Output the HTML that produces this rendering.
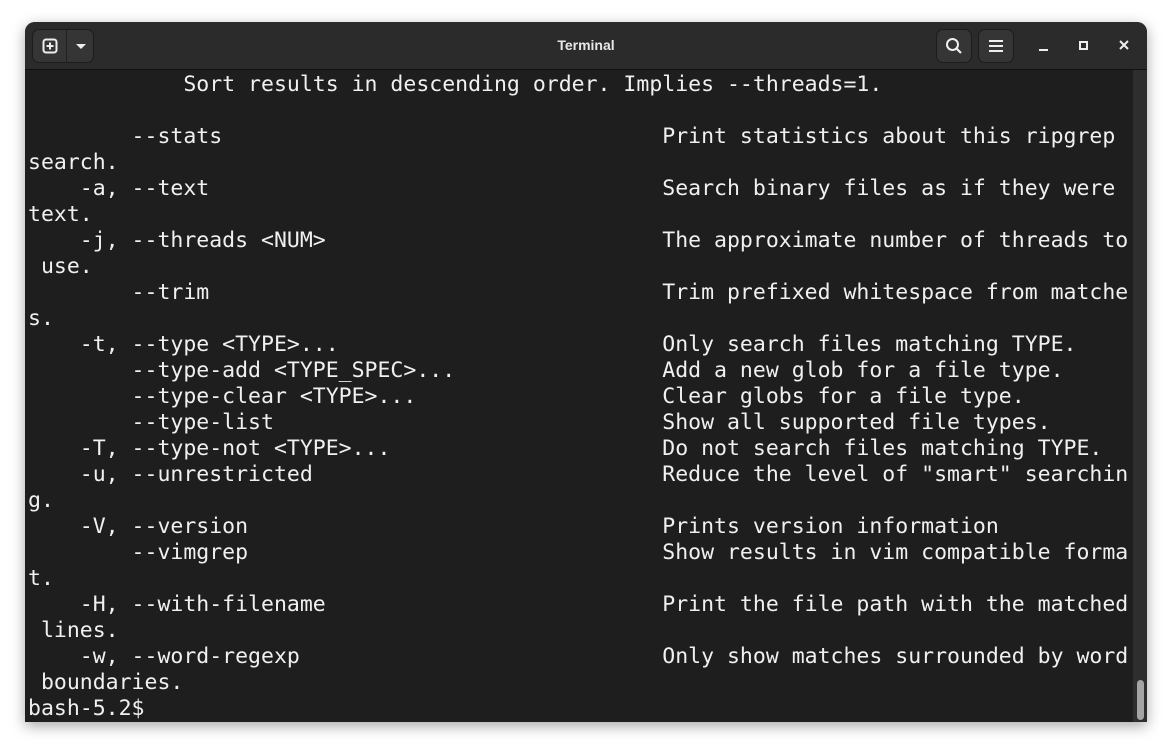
<!DOCTYPE html>
<html><head><style>
body{margin:0;width:1173px;height:751px;background:#fff;position:relative;overflow:hidden}
.win{position:absolute;left:25px;top:22px;width:1122px;height:700px;background:#1e1e1e;border-radius:10px 10px 0 0;box-shadow:0 4px 14px rgba(0,0,0,.35);overflow:hidden}
.hdr{position:absolute;left:0;top:0;right:0;height:47px;background:#2b2b2b;border-bottom:1px solid #111}
.title{position:absolute;left:0;right:0;top:15px;text-align:center;color:#e8e8e8;font:bold 14px "Liberation Sans",sans-serif}
.btn{position:absolute;top:8px;height:32px;background:#353535;border-radius:6px;box-shadow:0 0 0 1px #1c1c1c}
pre{position:absolute;left:3px;top:50px;margin:0;font:21.5px/26px "DejaVu Sans Mono",monospace;color:#f0f0f0;white-space:pre}
.sb{position:absolute;right:0;top:48px;width:14px;bottom:0;background:#2e2e2e}
.th{position:absolute;left:4px;width:7px;top:610px;height:40px;background:#a4a4a4;border-radius:4px}
</style></head><body>
<div class="win">
<div class="hdr">
 <div class="btn" style="left:8px;width:60px">
  <svg style="position:absolute;left:9px;top:8px" width="16" height="16" viewBox="0 0 16 16"><rect x="1.5" y="1.5" width="13" height="13" rx="2.5" fill="none" stroke="#eee" stroke-width="2"/><path d="M8 4.5v7M4.5 8h7" stroke="#eee" stroke-width="2"/></svg>
  <div style="position:absolute;left:33px;top:0;width:1px;height:32px;background:#222"></div>
  <svg style="position:absolute;left:42px;top:13px" width="12" height="7"><path d="M1 1h10L6 6z" fill="#eee"/></svg>
 </div>
 <div class="title">Terminal</div>
 <div class="btn" style="left:912px;width:34px">
  <svg style="position:absolute;left:8px;top:7px" width="18" height="18"><circle cx="7.5" cy="7.5" r="5.5" fill="none" stroke="#eee" stroke-width="2"/><path d="M11.5 11.5l4.5 4.5" stroke="#eee" stroke-width="2.2"/></svg>
 </div>
 <div class="btn" style="left:954px;width:34px">
  <svg style="position:absolute;left:9px;top:9px" width="16" height="14"><path d="M1 2h14M1 7h14M1 12h14" stroke="#eee" stroke-width="2"/></svg>
 </div>
 <div style="position:absolute;left:1014px;top:27px;width:9px;height:2px;background:#eee"></div>
 <div style="position:absolute;left:1054px;top:19px;width:5px;height:5px;border:2px solid #eee"></div>
 <svg style="position:absolute;left:1094px;top:18px" width="10" height="10"><path d="M1 1l8 8M9 1l-8 8" stroke="#eee" stroke-width="2"/></svg>
</div>
<pre>            Sort results in descending order. Implies --threads=1.

        --stats                                  Print statistics about this ripgrep
search.
    -a, --text                                   Search binary files as if they were
text.
    -j, --threads &lt;NUM&gt;                          The approximate number of threads to
 use.
        --trim                                   Trim prefixed whitespace from matche
s.
    -t, --type &lt;TYPE&gt;...                         Only search files matching TYPE.
        --type-add &lt;TYPE_SPEC&gt;...                Add a new glob for a file type.
        --type-clear &lt;TYPE&gt;...                   Clear globs for a file type.
        --type-list                              Show all supported file types.
    -T, --type-not &lt;TYPE&gt;...                     Do not search files matching TYPE.
    -u, --unrestricted                           Reduce the level of "smart" searchin
g.
    -V, --version                                Prints version information
        --vimgrep                                Show results in vim compatible forma
t.
    -H, --with-filename                          Print the file path with the matched
 lines.
    -w, --word-regexp                            Only show matches surrounded by word
 boundaries.
bash-5.2$ </pre>
<div class="sb"><div class="th"></div></div>
</div>
</body></html>
